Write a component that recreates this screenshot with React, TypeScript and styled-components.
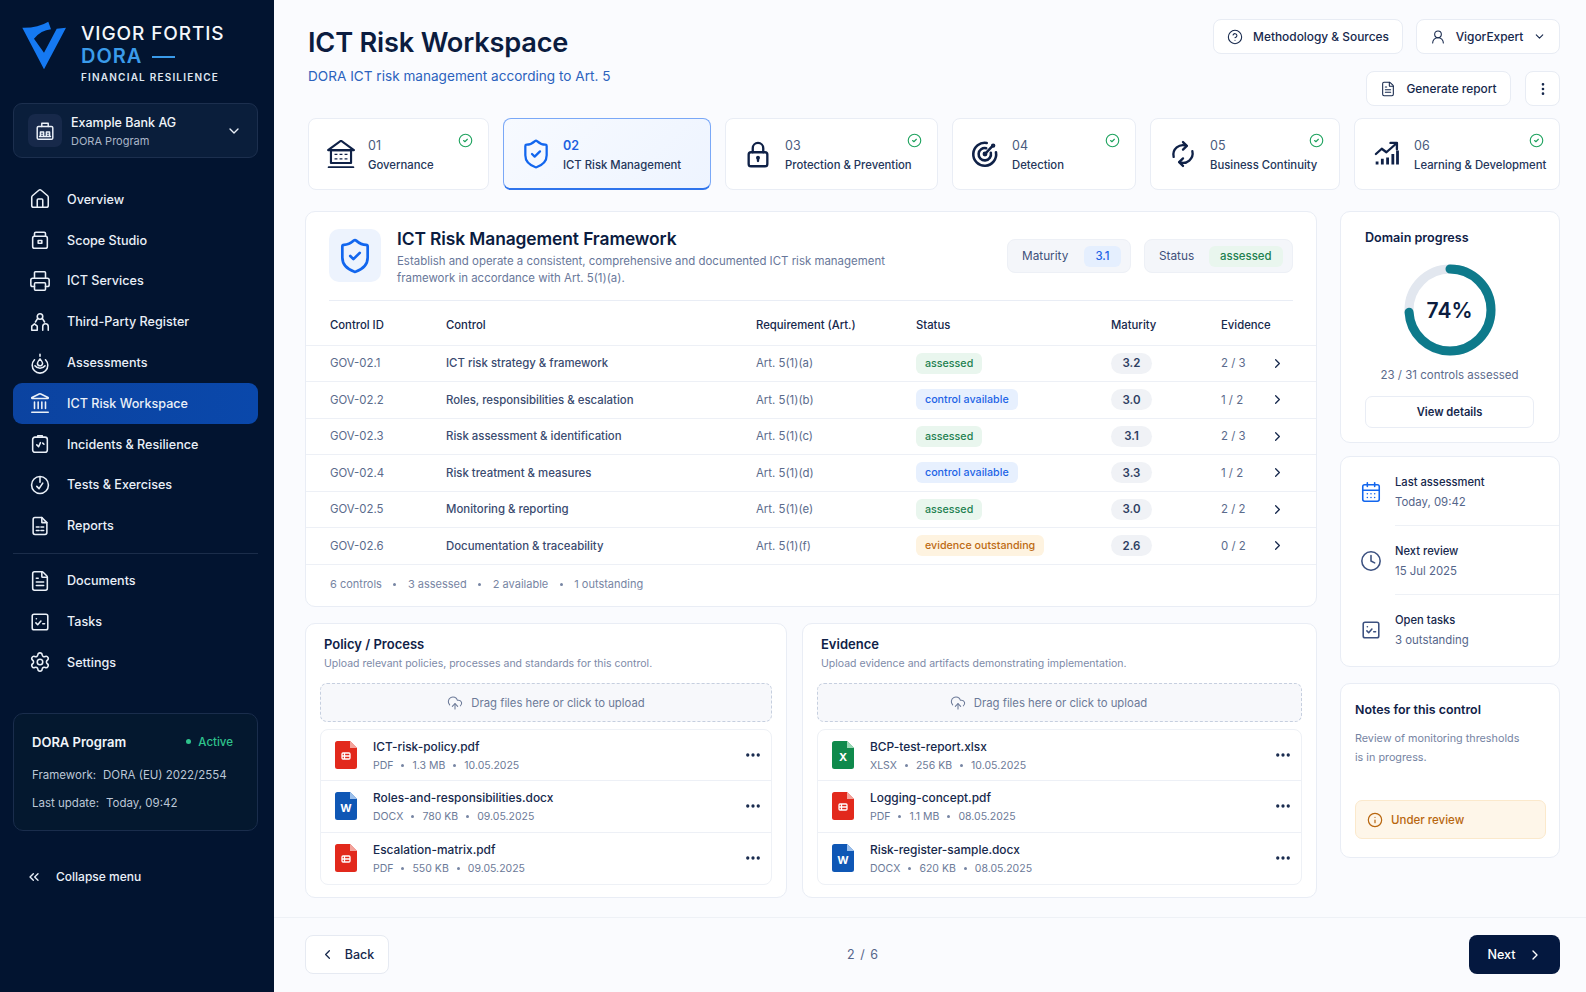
import React from 'react';
import styled, { createGlobalStyle } from 'styled-components';
import {
    ChevronDown,
    ChevronLeft,
    ChevronRight,
    ChevronsLeft,
    CircleCheck,
    CircleHelp,
    Clock,
    CloudUpload,
    Ellipsis,
    EllipsisVertical,
    FileText,
    House,
    Info,
    Landmark,
    Printer,
    Settings,
    ShieldCheck,
    UserRound,
    CalendarDays,
} from 'lucide-react';

const GlobalStyle = createGlobalStyle`
    * {
        box-sizing: border-box;
    }
    html, body {
        margin: 0;
        padding: 0;
        background: #fafbfe;
        font-family: Inter, "Noto Sans", "Liberation Sans", sans-serif;
        color: #0b1c3f;
    }
`;

const Page = styled.div`
    display: flex;
    width: 1586px;
    height: 992px;
    overflow: hidden;
`;

const Sidebar = styled.aside`
    width: 274px;
    flex-shrink: 0;
    background: #021430;
    color: #eaf0f8;
    display: flex;
    flex-direction: column;
    padding: 0 16px 0 13px;
`;

const Brand = styled.div`
    height: 103px;
    display: flex;
    padding: 21px 0 0 7px;
    gap: 15px;
`;

const BrandText = styled.div`
    display: flex;
    flex-direction: column;
    padding-top: 2px;
`;

const BrandName = styled.div`
    font-size: 19px;
    line-height: 22px;
    font-weight: 500;
    letter-spacing: 0.9px;
    color: #f4f7fb;
    white-space: nowrap;
`;

const BrandDora = styled.div`
    display: flex;
    align-items: center;
    gap: 10px;
    font-size: 20px;
    line-height: 23px;
    font-weight: 600;
    letter-spacing: 1px;
    color: #3a9bea;

    &::after {
        content: '';
        width: 23px;
        height: 2px;
        background: #3a9bea;
    }
`;

const BrandSub = styled.div`
    margin-top: 2px;
    font-size: 10px;
    line-height: 14px;
    font-weight: 600;
    letter-spacing: 1.2px;
    color: #dfe7f1;
    white-space: nowrap;
`;

const OrgCard = styled.div`
    height: 55px;
    display: flex;
    align-items: center;
    padding: 0 15px 0 14px;
    gap: 9px;
    background: #0a1e3b;
    border: 1px solid #1c2f4e;
    border-radius: 9px;
`;

const OrgIcon = styled.div`
    width: 34px;
    height: 33px;
    display: flex;
    align-items: center;
    justify-content: center;
    background: #17294a;
    border-radius: 7px;
`;

const OrgText = styled.div`
    flex: 1;
    padding-top: 2px;
`;

const OrgName = styled.div`
    font-size: 12.5px;
    line-height: 18px;
    font-weight: 500;
    color: #f1f5fa;
`;

const OrgSub = styled.div`
    margin-top: 1px;
    font-size: 11px;
    line-height: 16px;
    color: #aab6c8;
`;

const NavGroup = styled.nav<{ $first?: boolean }>`
    margin-top: ${({ $first }) => ($first ? '21px' : '6.6px')};
    display: flex;
    flex-direction: column;
`;

const NavItem = styled.div<{ $active?: boolean }>`
    height: 40.8px;
    display: flex;
    align-items: center;
    gap: 16px;
    padding-left: 16px;
    border-radius: 9px;
    font-size: 12.6px;
    font-weight: 500;
    color: #eaf0f8;
    background: ${({ $active }) => ($active ? 'linear-gradient(90deg, #0b43a0, #0a48ab)' : 'transparent')};
`;

const NavDivider = styled.div`
    height: 1px;
    margin-top: 6.6px;
    background: #1b2d4a;
`;

const ProgramCard = styled.div`
    margin-top: 30px;
    height: 118px;
    border: 1px solid #1a2d4c;
    border-radius: 10px;
    background: #04182f;
    padding: 18px 18px 0 18px;
`;

const ProgramHead = styled.div`
    display: flex;
    justify-content: space-between;
    align-items: center;
    height: 20px;
`;

const ProgramTitle = styled.div`
    font-size: 13px;
    font-weight: 600;
    color: #f1f5fa;
`;

const ProgramActive = styled.div`
    display: flex;
    align-items: center;
    gap: 7px;
    font-size: 11.5px;
    font-weight: 500;
    color: #2fc48d;
    padding-right: 6px;

    &::before {
        content: '';
        width: 5px;
        height: 5px;
        border-radius: 50%;
        background: #2fc48d;
    }
`;

const ProgramLine = styled.div`
    display: flex;
    gap: 7px;
    margin-top: 9px;
    font-size: 11.5px;
    line-height: 19px;
    color: #bcc7d6;
    white-space: nowrap;

    ${ProgramHead} + & {
        margin-top: 14px;
    }
`;

const Collapse = styled.div`
    margin-top: 35px;
    padding-left: 13px;
    height: 22px;
    display: flex;
    align-items: center;
    gap: 14px;
    font-size: 12px;
    font-weight: 500;
    color: #eaf0f8;
`;

const Main = styled.main`
    flex: 1;
    min-width: 0;
    display: flex;
    flex-direction: column;
    padding: 0 26px 0 31px;
    background: #fafbfe;
`;

const Header = styled.header`
    height: 118px;
    padding-left: 3px;
    display: flex;
    justify-content: space-between;
`;

const TitleBlock = styled.div`
    padding-top: 24px;
`;

const Title = styled.h1`
    margin: 0;
    font-size: 27.2px;
    line-height: 37px;
    font-weight: 600;
    letter-spacing: -0.2px;
    color: #0b1c3f;
`;

const Subtitle = styled.p`
    margin: 6px 0 0;
    font-size: 13.6px;
    line-height: 18px;
    color: #2b62bd;
`;

const HeaderActions = styled.div`
    padding-top: 19px;
    display: flex;
    flex-direction: column;
    align-items: flex-end;
    gap: 17px;
`;

const ActionRow = styled.div<{ $gap: number }>`
    display: flex;
    gap: ${({ $gap }) => $gap}px;
`;

const TopButton = styled.button<{ $width: number }>`
    width: ${({ $width }) => $width}px;
    height: 35px;
    display: flex;
    align-items: center;
    justify-content: center;
    gap: 10px;
    padding: 0;
    background: #fff;
    border: 1px solid #e8ecf4;
    border-radius: 8px;
    font-family: inherit;
    font-size: 11.9px;
    font-weight: 500;
    color: #16284c;
`;

const Steps = styled.div`
    margin-left: 3px;
    display: grid;
    grid-template-columns: 181px 208px 213px 184px 190px 206px;
    gap: 14px;
`;

const StepCard = styled.div<{ $active?: boolean }>`
    position: relative;
    height: 72px;
    display: flex;
    align-items: center;
    gap: 13px;
    padding-left: 18px;
    background: ${({ $active }) => ($active ? 'linear-gradient(135deg, #f7faff, #eef4ff)' : '#fff')};
    border: 1px solid ${({ $active }) => ($active ? '#7aa8f7' : '#e9edf5')};
    border-bottom: ${({ $active }) => ($active ? '2px solid #2f74ec' : '1px solid #e9edf5')};
    border-radius: 8px;
    color: #0f2147;
`;

const StepShield = styled(ShieldCheck)`
    margin: 0 -2px;
    color: #1266ee;
`;

const StepCheck = styled.span`
    position: absolute;
    top: 14px;
    right: 15px;
    display: flex;
    color: #1fa35f;
`;

const StepText = styled.div`
    padding-top: 3px;
`;

const StepNumber = styled.div<{ $active?: boolean }>`
    font-size: 12.5px;
    line-height: 18px;
    font-weight: ${({ $active }) => ($active ? 600 : 400)};
    color: ${({ $active }) => ($active ? '#1d5fe0' : '#4a5b7d')};
`;

const StepLabel = styled.div`
    margin-top: 1px;
    font-size: 11.3px;
    line-height: 18px;
    font-weight: 500;
    color: #24365a;
    white-space: nowrap;
`;

const Content = styled.div`
    margin-top: 21px;
    display: grid;
    grid-template-columns: 1012px 220px;
    gap: 23px;
`;

const LeftColumn = styled.div`
    display: flex;
    flex-direction: column;
    gap: 16px;
`;

const Card = styled.section`
    background: #fff;
    border: 1px solid #e9edf5;
    border-radius: 10px;
`;

const FrameworkCard = styled(Card)`
    height: 396px;
`;

const FrameworkHead = styled.div`
    margin: 0 23px;
    height: 89px;
    padding-top: 17px;
    display: flex;
    border-bottom: 1px solid #e9edf5;
`;

const FrameworkIcon = styled.div`
    width: 52px;
    height: 53px;
    flex-shrink: 0;
    display: flex;
    align-items: center;
    justify-content: center;
    background: #edf3fd;
    border-radius: 10px;
    color: #1266ee;
`;

const FrameworkText = styled.div`
    margin-left: 16px;
    flex: 1;
`;

const FrameworkTitle = styled.h2`
    margin: 0;
    font-size: 17.4px;
    line-height: 20px;
    font-weight: 600;
    letter-spacing: -0.1px;
    color: #0b1c3f;
`;

const FrameworkDesc = styled.p`
    margin: 3.5px 0 0;
    width: 500px;
    font-size: 11.45px;
    line-height: 17px;
    color: #68779a;
`;

const HeadChips = styled.div`
    display: flex;
    gap: 13px;
    padding-top: 10px;
`;

const HeadChip = styled.div<{ $width: number }>`
    width: ${({ $width }) => $width}px;
    height: 34px;
    display: flex;
    align-items: center;
    justify-content: space-between;
    padding: 0 9px 0 14px;
    background: #f4f6fa;
    border: 1px solid #edf0f6;
    border-radius: 8px;
    font-size: 11.8px;
    color: #40517a;
`;

const HeadChipValue = styled.span<{ $bg: string; $fg: string }>`
    display: flex;
    align-items: center;
    justify-content: center;
    height: 21px;
    padding: 0 11.5px;
    border-radius: 6px;
    background: ${({ $bg }) => $bg};
    color: ${({ $fg }) => $fg};
    font-size: 11.4px;
    font-weight: 500;
`;

const TableRow = styled.div<{ $head?: boolean }>`
    display: grid;
    grid-template-columns: 116px 310px 160px 195px 110px 49px 1fr;
    align-items: center;
    height: ${({ $head }) => ($head ? '44.5px' : '36.5px')};
    padding-left: 24px;
    padding-top: ${({ $head }) => ($head ? '4px' : '0')};
    border-bottom: 1px solid #edf0f6;
    font-size: 11.4px;
    color: #344569;
`;

const HeadCell = styled.div`
    font-size: 11.3px;
    font-weight: 500;
    color: #16284c;
`;

const MutedCell = styled.div`
    color: #5b6b8c;
`;

const ControlCell = styled.div`
    font-weight: 500;
    color: #3a4b70;
`;

const Pill = styled.span<{ $bg: string; $fg: string }>`
    display: inline-flex;
    align-items: center;
    height: 21px;
    padding: 0 9px;
    border-radius: 6px;
    background: ${({ $bg }) => $bg};
    color: ${({ $fg }) => $fg};
    font-size: 10.7px;
    font-weight: 500;
`;

const ScorePill = styled.span`
    display: inline-flex;
    align-items: center;
    justify-content: center;
    width: 41px;
    height: 21px;
    border-radius: 11px;
    background: #f0f2f6;
    font-size: 11.5px;
    font-weight: 600;
    color: #2e3f63;
`;

const RowChevron = styled.div`
    display: flex;
    color: #16284c;
`;

const TableSummary = styled.div`
    height: 39px;
    padding-left: 24px;
    display: flex;
    align-items: center;
    gap: 10.5px;
    font-size: 11px;
    color: #7785a3;
`;

const Dot = styled.span`
    width: 3px;
    height: 3px;
    margin: 0 1px;
    border-radius: 50%;
    background: #7785a3;
`;

const UploadRow = styled.div`
    display: grid;
    grid-template-columns: 482px 515px;
    gap: 15px;
`;

const UploadCard = styled(Card)`
    height: 275px;
    padding: 0 14px 0 14px;
`;

const UploadTitle = styled.h3`
    margin: 11px 0 0 4px;
    font-size: 13px;
    line-height: 18px;
    font-weight: 600;
    color: #0f2147;
`;

const UploadHint = styled.p`
    margin: 3px 0 0 4px;
    font-size: 10.5px;
    line-height: 15px;
    color: #7d8aa8;
`;

const DropZone = styled.div<{ $shift: number }>`
    margin-top: 12px;
    height: 39px;
    display: flex;
    align-items: center;
    justify-content: center;
    gap: 8px;
    padding-right: ${({ $shift }) => $shift}px;
    background: #f7f8fb;
    border: 1px dashed #c6cfdf;
    border-radius: 7px;
    font-size: 11.3px;
    color: #6c7a98;
`;

const FileList = styled.div`
    margin-top: 7px;
    border: 1px solid #eef1f6;
    border-radius: 8px;
`;

const FileRow = styled.div`
    height: 51.3px;
    display: flex;
    align-items: center;
    padding: 0 9px 0 14px;
    border-bottom: 1px solid #edf0f6;

    &:last-child {
        border-bottom: none;
    }
`;

const FileInfo = styled.div`
    flex: 1;
    margin-left: 16px;
`;

const FileName = styled.div`
    font-size: 11.9px;
    line-height: 17px;
    font-weight: 500;
    color: #16284c;
`;

const FileMeta = styled.div`
    margin-top: 3px;
    display: flex;
    align-items: center;
    gap: 7px;
    font-size: 10.5px;
    line-height: 15px;
    color: #6c7a98;
`;

const RowMenu = styled.div`
    display: flex;
    color: #16284c;
`;

const RightColumn = styled.div`
    display: flex;
    flex-direction: column;
`;

const ProgressCard = styled(Card)`
    height: 232px;
    padding: 16px 25px 0 24px;
    display: flex;
    flex-direction: column;
    align-items: center;
`;

const SideTitle = styled.h3`
    margin: 0;
    width: 100%;
    font-size: 12.6px;
    line-height: 20px;
    font-weight: 600;
    color: #0f2147;
`;

const RingWrap = styled.div`
    position: relative;
    margin-top: 16px;
    width: 92px;
    height: 92px;
    display: flex;
    align-items: center;
    justify-content: center;
`;

const RingValue = styled.div`
    position: absolute;
    inset: 0;
    display: flex;
    align-items: center;
    justify-content: center;
    font-size: 21px;
    font-weight: 600;
    color: #0b1c3f;
`;

const RingCaption = styled.div`
    margin-top: 11px;
    font-size: 11.5px;
    line-height: 16px;
    color: #5b6b8c;
    white-space: nowrap;
`;

const DetailsButton = styled.button`
    margin-top: 13px;
    width: 169px;
    height: 32px;
    background: #fff;
    border: 1px solid #e9edf5;
    border-radius: 7px;
    font-family: inherit;
    font-size: 11.2px;
    font-weight: 600;
    color: #16284c;
`;

const InfoCard = styled(Card)`
    margin-top: 13px;
    height: 211px;
`;

const InfoRow = styled.div`
    height: 69px;
    display: flex;
    align-items: center;
    padding-left: 19px;
    gap: 13px;
`;

const InfoIcon = styled.div<{ $color: string }>`
    display: flex;
    color: ${({ $color }) => $color};
`;

const InfoText = styled.div`
    flex: 1;
    align-self: stretch;
    display: flex;
    flex-direction: column;
    justify-content: center;
    padding-top: 1px;
    border-bottom: 1px solid #eef1f6;

    ${InfoRow}:last-child & {
        border-bottom: none;
    }
`;

const InfoLabel = styled.div`
    font-size: 11.2px;
    line-height: 18px;
    font-weight: 500;
    color: #16284c;
`;

const InfoValue = styled.div`
    margin-top: 2px;
    font-size: 11.4px;
    line-height: 18px;
    color: #55658a;
`;

const NotesCard = styled(Card)`
    margin-top: 16px;
    height: 175px;
    padding: 16px 13px 0 14px;
`;

const NotesTitle = styled.h3`
    margin: 0;
    font-size: 12.4px;
    line-height: 20px;
    font-weight: 600;
    color: #0f2147;
`;

const NotesBody = styled.p`
    margin: 9px 0 0;
    font-size: 10.8px;
    line-height: 19px;
    color: #7684a3;
`;

const ReviewBanner = styled.div`
    margin-top: 33px;
    height: 39px;
    display: flex;
    align-items: center;
    gap: 8px;
    padding-left: 11px;
    background: #fef6e9;
    border: 1px solid #fbe9cc;
    border-radius: 7px;
    font-size: 11.5px;
    font-weight: 500;
    color: #b8660f;
`;

const Footer = styled.footer`
    margin: 19px -26px 0 -31px;
    padding: 17px 26px 0 31px;
    display: flex;
    align-items: center;
    border-top: 1px solid #eef1f6;
`;

const BackButton = styled.button`
    width: 84px;
    height: 39px;
    display: flex;
    align-items: center;
    justify-content: center;
    gap: 10px;
    background: #fff;
    border: 1px solid #e6eaf2;
    border-radius: 8px;
    font-family: inherit;
    font-size: 12.5px;
    font-weight: 500;
    color: #16284c;
`;

const Pager = styled.div`
    margin-left: 458px;
    font-size: 12.5px;
    letter-spacing: 1px;
    color: #55658a;
`;

const NextButton = styled.button`
    margin-left: auto;
    width: 91px;
    height: 39px;
    display: flex;
    align-items: center;
    justify-content: center;
    gap: 11px;
    padding-left: 7px;
    background: #04183f;
    border: none;
    border-radius: 8px;
    font-family: inherit;
    font-size: 12.6px;
    font-weight: 500;
    color: #fff;
`;

interface IconProps {
    size?: number;
    width?: number;
    box?: string;
}

function Line({ size = 22, width = 1.7, box = '0 0 24 24', children }: IconProps & { children: React.ReactNode }) {
    return (
        <svg width={size} height={size} viewBox={box} fill="none" stroke="currentColor" strokeWidth={width} strokeLinecap="round" strokeLinejoin="round">
            {children}
        </svg>
    );
}

function LogoMark() {
    return (
        <svg width="46" height="50" viewBox="20 20 46 50" style={{ flexShrink: 0 }}>
            <path d="M22.3 26.7Q38 27 48.3 20.7L51 28.2Q41 29 34 37.7L44 51.7L56.7 27.7L66 26.7L44 68.3Z" fill="#1579f2" />
        </svg>
    );
}

function BankBuilding() {
    return (
        <Line size={22} width={1.6}>
            <rect x="3.5" y="7" width="17" height="14" rx="1.5" />
            <path d="M8.5 7V3.5h7V7" />
            <path d="M7 18v-5h3.5v5M13.5 18v-5H17v5M8.7 15.5h.1M15.2 15.5h.1M6 18h12" />
        </Line>
    );
}

function ScopeIcon() {
    return (
        <Line>
            <rect x="4" y="8" width="16" height="13" rx="2" />
            <path d="M6 8V5a1.5 1.5 0 0 1 1.5-1.5h9A1.5 1.5 0 0 1 18 5v3" />
            <rect x="10" y="12.5" width="4" height="3" />
        </Line>
    );
}

function PartnerIcon() {
    return (
        <Line>
            <circle cx="12" cy="6" r="3" />
            <path d="M3 21v-4.5L6 14l3 2.5V21zM15 21v-4a3 3 0 0 1 6 0v4M9.5 8 7 12M14.5 8l2.5 4" />
        </Line>
    );
}

function AssessIcon() {
    return (
        <Line>
            <path d="M12 2.5v2M6 8.5a8.5 8.5 0 1 0 12 0" />
            <path d="M12 7.5c1.8 2.2 2.8 3.5 2.8 4.8a2.8 2.8 0 0 1-5.6 0c0-1.3 1-2.6 2.8-4.8z" />
            <path d="M6.5 15a7 7 0 0 0 11 0" />
        </Line>
    );
}

function IncidentIcon() {
    return (
        <Line>
            <rect x="4" y="4.5" width="16" height="16.5" rx="2.5" />
            <path d="M9.5 4.5V3h5v1.5M8.5 13l2 2 2-4.5M15 11l1.3 1.3" />
        </Line>
    );
}

function TestIcon() {
    return (
        <Line>
            <circle cx="12" cy="12" r="9.2" />
            <path d="M12 3v6M8.5 13.5l2.5 2.5 4-6" />
        </Line>
    );
}

function TaskIcon({ size = 22 }: IconProps) {
    return (
        <Line size={size}>
            <rect x="3.5" y="3.5" width="17" height="17" rx="2" />
            <path d="M7.5 13l2 2 3.5-4M8 8.5h.1M15 14h2" />
        </Line>
    );
}

function ReportIcon() {
    return (
        <Line>
            <path d="M14 2.8H6.5a2 2 0 0 0-2 2v14.4a2 2 0 0 0 2 2h11a2 2 0 0 0 2-2V8.3z" />
            <path d="M14 2.8v5.5h5.5M8 13h3M13 13h3M8 17h3M13 17h3" />
        </Line>
    );
}

function GovernanceIcon() {
    return (
        <Line size={28} width={1.5} box="2.5 2.5 19 19.5">
            <path d="M3 9.5 12 3l9 6.5z" />
            <path d="M3.5 21.5h17M5 18.5h14V9.5H5z" />
            <path d="M8.5 12v.9M12 12v.9M15.5 12v.9M8.5 15.2v.9M12 15.2v.9M15.5 15.2v.9" strokeWidth="2" strokeLinecap="butt" />
        </Line>
    );
}

function LockIcon() {
    return (
        <Line size={28} width={2}>
            <rect x="4" y="10.5" width="16" height="12" rx="2" />
            <path d="M7.5 10.5V7a4.5 4.5 0 0 1 9 0v3.5" />
            <path d="M12 15.2v2.8" />
            <circle cx="12" cy="15.2" r=".7" />
        </Line>
    );
}

function RadarIcon() {
    return (
        <Line size={28} width={2.2}>
            <path d="M13.5 2.6A9.8 9.8 0 1 0 21.4 10.5" />
            <path d="M13 7a5.3 5.3 0 1 0 4 4" />
            <path d="M12 12l6.5-7" />
            <circle cx="12" cy="12" r="1" />
            <circle cx="19" cy="4.8" r=".8" />
        </Line>
    );
}

function CycleIcon() {
    return (
        <Line size={28} width={2}>
            <path d="M4 14.5A8.2 8.2 0 0 1 15 5" />
            <path d="M12 1.8 15.3 5 12 8.2" />
            <path d="M20 9.5A8.2 8.2 0 0 1 9 19" />
            <path d="M12 15.8 8.7 19l3.3 3.2" />
        </Line>
    );
}

function GrowthIcon() {
    return (
        <Line size={28} width={2}>
            <path d="M2.5 12l5-4.5 4 3L20 3" />
            <path d="M15 2.5h5.5V8" />
            <path d="M3.5 21v-2.5M8 21v-5M12.5 21v-6M17 21v-9M21 21V9" strokeWidth="2.4" strokeLinecap="butt" />
        </Line>
    );
}

const fileColors = {
    pdf: { body: '#e2291c', fold: '#f3a39b' },
    word: { body: '#0f57b5', fold: '#9cc0ec' },
    excel: { body: '#0f8a4c', fold: '#9ad8b5' },
};

function FileBadge({ kind }: { kind: keyof typeof fileColors }) {
    const { body, fold } = fileColors[kind];
    return (
        <svg width="22" height="28" viewBox="0 0 22 28" style={{ flexShrink: 0 }}>
            <path d="M2.5 0H15l7 7v18.5a2.5 2.5 0 0 1-2.5 2.5h-17A2.5 2.5 0 0 1 0 25.5v-23A2.5 2.5 0 0 1 2.5 0z" fill={body} />
            <path d="M15 0l7 7h-7z" fill={fold} />
            {kind === 'pdf' && (
                <g fill="none" stroke="#fff" strokeWidth="1.3">
                    <rect x="7" y="12" width="8" height="6" rx="1" />
                    <path d="M9.5 12v6M7 15h8" />
                </g>
            )}
            {kind === 'word' && (
                <text x="11" y="20" textAnchor="middle" fontSize="11" fontWeight="700" fill="#fff" fontFamily="Inter, sans-serif">W</text>
            )}
            {kind === 'excel' && (
                <text x="11" y="20" textAnchor="middle" fontSize="11" fontWeight="700" fill="#fff" fontFamily="Inter, sans-serif">X</text>
            )}
        </svg>
    );
}

const navTop = [
    { label: 'Overview', icon: <House size={22} strokeWidth={1.7} /> },
    { label: 'Scope Studio', icon: <ScopeIcon /> },
    { label: 'ICT Services', icon: <Printer size={22} strokeWidth={1.7} /> },
    { label: 'Third-Party Register', icon: <PartnerIcon /> },
    { label: 'Assessments', icon: <AssessIcon /> },
    { label: 'ICT Risk Workspace', icon: <Landmark size={22} strokeWidth={1.7} />, active: true },
    { label: 'Incidents & Resilience', icon: <IncidentIcon /> },
    { label: 'Tests & Exercises', icon: <TestIcon /> },
    { label: 'Reports', icon: <ReportIcon /> },
];

const navBottom = [
    { label: 'Documents', icon: <FileText size={22} strokeWidth={1.7} /> },
    { label: 'Tasks', icon: <TaskIcon /> },
    { label: 'Settings', icon: <Settings size={22} strokeWidth={1.7} /> },
];

const steps = [
    { no: '01', label: 'Governance', icon: <GovernanceIcon />, done: true },
    { no: '02', label: 'ICT Risk Management', icon: <StepShield size={32} strokeWidth={1.7} />, active: true },
    { no: '03', label: 'Protection & Prevention', icon: <LockIcon />, done: true },
    { no: '04', label: 'Detection', icon: <RadarIcon />, done: true },
    { no: '05', label: 'Business Continuity', icon: <CycleIcon />, done: true },
    { no: '06', label: 'Learning & Development', icon: <GrowthIcon />, done: true },
];

const statusStyles = {
    assessed: { bg: '#e9f6ee', fg: '#21804f' },
    'control available': { bg: '#e7f0fe', fg: '#1d63e6' },
    'evidence outstanding': { bg: '#fef3e0', fg: '#bd6a12' },
};

const controls: { id: string; name: string; art: string; status: keyof typeof statusStyles; score: string; evidence: string }[] = [
    { id: 'GOV-02.1', name: 'ICT risk strategy & framework', art: 'Art. 5(1)(a)', status: 'assessed', score: '3.2', evidence: '2 / 3' },
    { id: 'GOV-02.2', name: 'Roles, responsibilities & escalation', art: 'Art. 5(1)(b)', status: 'control available', score: '3.0', evidence: '1 / 2' },
    { id: 'GOV-02.3', name: 'Risk assessment & identification', art: 'Art. 5(1)(c)', status: 'assessed', score: '3.1', evidence: '2 / 3' },
    { id: 'GOV-02.4', name: 'Risk treatment & measures', art: 'Art. 5(1)(d)', status: 'control available', score: '3.3', evidence: '1 / 2' },
    { id: 'GOV-02.5', name: 'Monitoring & reporting', art: 'Art. 5(1)(e)', status: 'assessed', score: '3.0', evidence: '2 / 2' },
    { id: 'GOV-02.6', name: 'Documentation & traceability', art: 'Art. 5(1)(f)', status: 'evidence outstanding', score: '2.6', evidence: '0 / 2' },
];

const uploads: { title: string; hint: string; shift: number; files: { name: string; kind: keyof typeof fileColors; type: string; size: string; date: string }[] }[] = [
    {
        title: 'Policy / Process',
        hint: 'Upload relevant policies, processes and standards for this control.',
        shift: 0,
        files: [
            { name: 'ICT-risk-policy.pdf', kind: 'pdf', type: 'PDF', size: '1.3 MB', date: '10.05.2025' },
            { name: 'Roles-and-responsibilities.docx', kind: 'word', type: 'DOCX', size: '780 KB', date: '09.05.2025' },
            { name: 'Escalation-matrix.pdf', kind: 'pdf', type: 'PDF', size: '550 KB', date: '09.05.2025' },
        ],
    },
    {
        title: 'Evidence',
        hint: 'Upload evidence and artifacts demonstrating implementation.',
        shift: 22,
        files: [
            { name: 'BCP-test-report.xlsx', kind: 'excel', type: 'XLSX', size: '256 KB', date: '10.05.2025' },
            { name: 'Logging-concept.pdf', kind: 'pdf', type: 'PDF', size: '1.1 MB', date: '08.05.2025' },
            { name: 'Risk-register-sample.docx', kind: 'word', type: 'DOCX', size: '620 KB', date: '08.05.2025' },
        ],
    },
];

const RING_RADIUS = 41;
const ringLength = 2 * Math.PI * RING_RADIUS;

function App() {
    return (
        <Page>
            <GlobalStyle />
            <Sidebar>
                <Brand>
                    <LogoMark />
                    <BrandText>
                        <BrandName>VIGOR FORTIS</BrandName>
                        <BrandDora>DORA</BrandDora>
                        <BrandSub>FINANCIAL RESILIENCE</BrandSub>
                    </BrandText>
                </Brand>
                <OrgCard>
                    <OrgIcon>
                        <BankBuilding />
                    </OrgIcon>
                    <OrgText>
                        <OrgName>Example Bank AG</OrgName>
                        <OrgSub>DORA Program</OrgSub>
                    </OrgText>
                    <ChevronDown size={16} />
                </OrgCard>
                <NavGroup $first>
                    {navTop.map(item => (
                        <NavItem key={item.label} $active={item.active}>
                            {item.icon}
                            {item.label}
                        </NavItem>
                    ))}
                </NavGroup>
                <NavDivider />
                <NavGroup>
                    {navBottom.map(item => (
                        <NavItem key={item.label}>
                            {item.icon}
                            {item.label}
                        </NavItem>
                    ))}
                </NavGroup>
                <ProgramCard>
                    <ProgramHead>
                        <ProgramTitle>DORA Program</ProgramTitle>
                        <ProgramActive>Active</ProgramActive>
                    </ProgramHead>
                    <ProgramLine>
                        <span>Framework:</span>
                        <span>DORA (EU) 2022/2554</span>
                    </ProgramLine>
                    <ProgramLine>
                        <span>Last update:</span>
                        <span>Today, 09:42</span>
                    </ProgramLine>
                </ProgramCard>
                <Collapse>
                    <ChevronsLeft size={16} />
                    Collapse menu
                </Collapse>
            </Sidebar>
            <Main>
                <Header>
                    <TitleBlock>
                        <Title>ICT Risk Workspace</Title>
                        <Subtitle>DORA ICT risk management according to Art. 5</Subtitle>
                    </TitleBlock>
                    <HeaderActions>
                        <ActionRow $gap={13}>
                            <TopButton $width={190}>
                                <CircleHelp size={16} strokeWidth={1.6} />
                                Methodology &amp; Sources
                            </TopButton>
                            <TopButton $width={144}>
                                <UserRound size={16} strokeWidth={1.6} />
                                VigorExpert
                                <ChevronDown size={13} />
                            </TopButton>
                        </ActionRow>
                        <ActionRow $gap={14}>
                            <TopButton $width={145}>
                                <FileText size={16} strokeWidth={1.6} />
                                Generate report
                            </TopButton>
                            <TopButton $width={35}>
                                <EllipsisVertical size={16} />
                            </TopButton>
                        </ActionRow>
                    </HeaderActions>
                </Header>
                <Steps>
                    {steps.map(step => (
                        <StepCard key={step.no} $active={step.active}>
                            {step.icon}
                            <StepText>
                                <StepNumber $active={step.active}>{step.no}</StepNumber>
                                <StepLabel>{step.label}</StepLabel>
                            </StepText>
                            {step.done && (
                                <StepCheck>
                                    <CircleCheck size={15} strokeWidth={1.8} />
                                </StepCheck>
                            )}
                        </StepCard>
                    ))}
                </Steps>
                <Content>
                    <LeftColumn>
                        <FrameworkCard>
                            <FrameworkHead>
                                <FrameworkIcon>
                                    <ShieldCheck size={38} strokeWidth={1.7} />
                                </FrameworkIcon>
                                <FrameworkText>
                                    <FrameworkTitle>ICT Risk Management Framework</FrameworkTitle>
                                    <FrameworkDesc>
                                        Establish and operate a consistent, comprehensive and documented ICT risk management
                                        framework in accordance with Art. 5(1)(a).
                                    </FrameworkDesc>
                                </FrameworkText>
                                <HeadChips>
                                    <HeadChip $width={124}>
                                        Maturity
                                        <HeadChipValue $bg="#e5effe" $fg="#1d63e6">3.1</HeadChipValue>
                                    </HeadChip>
                                    <HeadChip $width={149}>
                                        Status
                                        <HeadChipValue $bg="#e9f6ee" $fg="#21804f">assessed</HeadChipValue>
                                    </HeadChip>
                                </HeadChips>
                            </FrameworkHead>
                            <TableRow $head>
                                <HeadCell>Control ID</HeadCell>
                                <HeadCell>Control</HeadCell>
                                <HeadCell>Requirement (Art.)</HeadCell>
                                <HeadCell>Status</HeadCell>
                                <HeadCell>Maturity</HeadCell>
                                <HeadCell>Evidence</HeadCell>
                            </TableRow>
                            {controls.map(row => (
                                <TableRow key={row.id}>
                                    <MutedCell>{row.id}</MutedCell>
                                    <ControlCell>{row.name}</ControlCell>
                                    <MutedCell>{row.art}</MutedCell>
                                    <div>
                                        <Pill $bg={statusStyles[row.status].bg} $fg={statusStyles[row.status].fg}>
                                            {row.status}
                                        </Pill>
                                    </div>
                                    <div>
                                        <ScorePill>{row.score}</ScorePill>
                                    </div>
                                    <MutedCell>{row.evidence}</MutedCell>
                                    <RowChevron>
                                        <ChevronRight size={15} />
                                    </RowChevron>
                                </TableRow>
                            ))}
                            <TableSummary>
                                6 controls <Dot /> 3 assessed <Dot /> 2 available <Dot /> 1 outstanding
                            </TableSummary>
                        </FrameworkCard>
                        <UploadRow>
                            {uploads.map(group => (
                                <UploadCard key={group.title}>
                                    <UploadTitle>{group.title}</UploadTitle>
                                    <UploadHint>{group.hint}</UploadHint>
                                    <DropZone $shift={group.shift}>
                                        <CloudUpload size={16} strokeWidth={1.6} />
                                        Drag files here or click to upload
                                    </DropZone>
                                    <FileList>
                                        {group.files.map(file => (
                                            <FileRow key={file.name}>
                                                <FileBadge kind={file.kind} />
                                                <FileInfo>
                                                    <FileName>{file.name}</FileName>
                                                    <FileMeta>
                                                        {file.type} <Dot /> {file.size} <Dot /> {file.date}
                                                    </FileMeta>
                                                </FileInfo>
                                                <RowMenu>
                                                    <Ellipsis size={18} strokeWidth={2.4} />
                                                </RowMenu>
                                            </FileRow>
                                        ))}
                                    </FileList>
                                </UploadCard>
                            ))}
                        </UploadRow>
                    </LeftColumn>
                    <RightColumn>
                        <ProgressCard>
                            <SideTitle>Domain progress</SideTitle>
                            <RingWrap>
                                <svg width="92" height="92" viewBox="0 0 92 92">
                                    <circle cx="46" cy="46" r={RING_RADIUS} fill="none" stroke="#e2e7ef" strokeWidth="9" />
                                    <circle
                                        cx="46"
                                        cy="46"
                                        r={RING_RADIUS}
                                        fill="none"
                                        stroke="#0e7a8b"
                                        strokeWidth="9"
                                        strokeLinecap="round"
                                        strokeDasharray={`${ringLength * 0.74} ${ringLength}`}
                                        transform="rotate(-90 46 46)"
                                    />
                                </svg>
                                <RingValue>74%</RingValue>
                            </RingWrap>
                            <RingCaption>23 / 31 controls assessed</RingCaption>
                            <DetailsButton>View details</DetailsButton>
                        </ProgressCard>
                        <InfoCard>
                            <InfoRow>
                                <InfoIcon $color="#1266ee">
                                    <CalendarDays size={22} strokeWidth={1.7} />
                                </InfoIcon>
                                <InfoText>
                                    <InfoLabel>Last assessment</InfoLabel>
                                    <InfoValue>Today, 09:42</InfoValue>
                                </InfoText>
                            </InfoRow>
                            <InfoRow>
                                <InfoIcon $color="#3c5180">
                                    <Clock size={22} strokeWidth={1.7} />
                                </InfoIcon>
                                <InfoText>
                                    <InfoLabel>Next review</InfoLabel>
                                    <InfoValue>15 Jul 2025</InfoValue>
                                </InfoText>
                            </InfoRow>
                            <InfoRow>
                                <InfoIcon $color="#3c5180">
                                    <TaskIcon />
                                </InfoIcon>
                                <InfoText>
                                    <InfoLabel>Open tasks</InfoLabel>
                                    <InfoValue>3 outstanding</InfoValue>
                                </InfoText>
                            </InfoRow>
                        </InfoCard>
                        <NotesCard>
                            <NotesTitle>Notes for this control</NotesTitle>
                            <NotesBody>
                                Review of monitoring thresholds
                                <br />
                                is in progress.
                            </NotesBody>
                            <ReviewBanner>
                                <Info size={16} strokeWidth={1.8} />
                                Under review
                            </ReviewBanner>
                        </NotesCard>
                    </RightColumn>
                </Content>
                <Footer>
                    <BackButton>
                        <ChevronLeft size={15} />
                        Back
                    </BackButton>
                    <Pager>2 / 6</Pager>
                    <NextButton>
                        Next
                        <ChevronRight size={16} />
                    </NextButton>
                </Footer>
            </Main>
        </Page>
    );
}

export default App;
